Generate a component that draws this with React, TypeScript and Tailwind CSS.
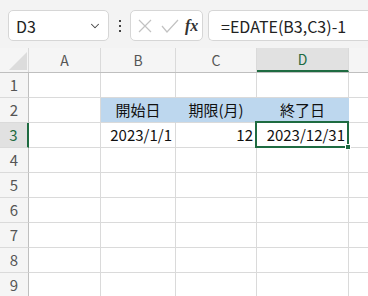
import { ChevronDown } from "lucide-react";

const cols = [
  { name: "A", w: "w-[72px]" },
  { name: "B", w: "w-[75px]" },
  { name: "C", w: "w-[81px]" },
  { name: "D", w: "w-[92px]" },
];

const rows = [1, 2, 3, 4, 5, 6, 7, 8, 9];

const cellText: Record<string, { text: string; align: string }> = {
  B2: { text: "開始日", align: "justify-center" },
  C2: { text: "期限(月)", align: "justify-center" },
  D2: { text: "終了日", align: "justify-center" },
  B3: { text: "2023/1/1", align: "justify-end" },
  C3: { text: "12", align: "justify-end" },
  D3: { text: "2023/12/31", align: "justify-end" },
};

const App = () => {
  return (
    <div
      className="w-[368px] h-[296px] overflow-hidden bg-white relative"
      style={{ fontFamily: '"Noto Sans CJK JP", "Noto Sans", sans-serif' }}
    >
      {/* Formula bar */}
      <div className="h-[48px] bg-[#f3f3f3] flex items-start pt-[10px]">
        <div className="ml-[8px] w-[101px] h-[31px] bg-white border border-[#d6d6d6] rounded-[5px] flex items-center justify-between pl-[7px] pr-[6px]">
          <span className="text-[16px] text-[#222]">D3</span>
          <ChevronDown size={14} strokeWidth={1.8} className="text-[#444]" />
        </div>
        <div className="w-[21px] h-[31px] flex flex-col items-center justify-center gap-[3px]">
          <span className="w-[2px] h-[2px] bg-[#444]" />
          <span className="w-[2px] h-[2px] bg-[#444]" />
          <span className="w-[2px] h-[2px] bg-[#444]" />
        </div>
        <div className="w-[73px] h-[31px] bg-white border border-[#d6d6d6] rounded-[5px] flex items-center pl-[6px]">
          <svg width="16" height="16" viewBox="0 0 16 16" className="mr-[8px]">
            <path d="M2 2 L14 14 M14 2 L2 14" stroke="#c2c2c2" strokeWidth="1.2" fill="none" />
          </svg>
          <svg width="18" height="16" viewBox="0 0 18 16" className="mr-[6px]">
            <path d="M1 8 L6 14 L17 2" stroke="#c2c2c2" strokeWidth="1.2" fill="none" />
          </svg>
          <span
            className="text-[16px] italic text-[#333] font-semibold"
            style={{ fontFamily: '"Liberation Serif", serif' }}
          >
            fx
          </span>
        </div>
        <div className="ml-[5px] flex-1 h-[31px] bg-white border border-r-0 border-[#d6d6d6] rounded-l-[5px] flex items-center pl-[12px]">
          <span className="text-[16px] text-[#222]">=EDATE(B3,C3)-1</span>
        </div>
      </div>

      {/* Column headers */}
      <div className="flex h-[25px] bg-[#f5f5f5] border-b border-[#bfbfbf]">
        <div className="w-[29px] border-r border-[#dadada] flex items-end justify-end pr-[1px] pb-[2px]">
          <svg width="18" height="18" viewBox="0 0 18 18">
            <path d="M18 0 L18 18 L0 18 Z" fill="#dcdcdc" />
          </svg>
        </div>
        {cols.map((c) =>
          c.name === "D" ? (
            <div
              key={c.name}
              className={`${c.w} bg-[#e1e1e1] border-r border-[#dadada] border-b-2 border-b-[#1e6b41] flex items-center justify-center text-[14px] text-[#1e6b41]`}
            >
              {c.name}
            </div>
          ) : (
            <div
              key={c.name}
              className={`${c.w} border-r border-[#dadada] flex items-center justify-center text-[14px] text-[#555]`}
            >
              {c.name}
            </div>
          )
        )}
        <div className="flex-1" />
      </div>

      {/* Rows */}
      {rows.map((r) => (
        <div key={r} className="flex h-[25px]">
          {r === 3 ? (
            <div className="w-[29px] bg-[#e1e1e1] border-r-2 border-[#1e6b41] border-b border-b-[#dadada] flex items-center justify-center text-[15px] text-[#1e6b41]">
              {r}
            </div>
          ) : (
            <div className="w-[29px] bg-[#f5f5f5] border-r border-[#bfbfbf] border-b border-b-[#dadada] flex items-center justify-center text-[15px] text-[#555]">
              {r}
            </div>
          )}
          {cols.map((c) => {
            const key = `${c.name}${r}`;
            const cell = cellText[key];
            const blue = r === 2 && c.name !== "A";
            return (
              <div
                key={key}
                className={`${c.w} border-r border-b border-[#dadada] flex items-center px-[3px] text-[15px] text-[#111] ${
                  blue ? "bg-[#bdd7ee] border-r-[#bdd7ee]" : ""
                } ${cell ? cell.align : ""}`}
              >
                {cell?.text}
              </div>
            );
          })}
          <div className="flex-1 border-b border-[#dadada]" />
        </div>
      ))}

      {/* Selection */}
      <div className="absolute left-[255px] top-[121px] w-[94px] h-[27px] border-2 border-[#1e6b41] pointer-events-none" />
      <div className="absolute left-[345px] top-[144px] w-[6px] h-[6px] bg-[#1e6b41] border border-white" />
    </div>
  );
};

export default App;
